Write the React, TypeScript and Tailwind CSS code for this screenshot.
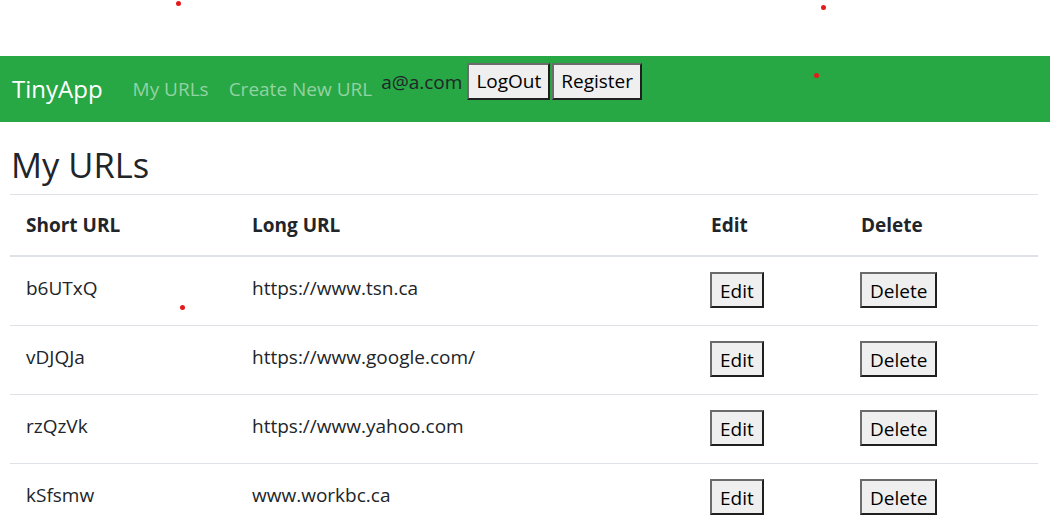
import React from "react";

const urls = [
  { id: "b6UTxQ", long: "https://www.tsn.ca" },
  { id: "vDJQJa", long: "https://www.google.com/" },
  { id: "rzQzVk", long: "https://www.yahoo.com" },
  { id: "kSfsmw", long: "www.workbc.ca" },
];

function OldButton({ children }: { children: React.ReactNode }) {
  return (
    <button className="h-[36px] px-[8px] pt-[3px] bg-[#efefef] text-[19px] leading-none text-black border-2 border-t-[#6b6b6b] border-l-[#6b6b6b] border-b-[#1f1f1f] border-r-[#1f1f1f]">
      {children}
    </button>
  );
}

export default function App() {
  return (
    <div
      className="relative w-[1050px] h-[527px] overflow-hidden bg-white text-[#212529]"
      style={{ fontFamily: '"Open Sans", "Noto Sans", sans-serif' }}
    >
      <div className="h-[56px]" />
      <nav className="h-[66px] bg-[#28a745] flex items-center px-[12px]">
        <span className="text-white text-[24px] mr-[30px]">TinyApp</span>
        <span className="text-[#93d3a2] text-[19px] mr-[20px]">My URLs</span>
        <span className="text-[#93d3a2] text-[19px] mr-[9px]">Create New URL</span>
        <span className="self-start mt-[12px] text-[19px] text-[#212529] mr-[5px]">a@a.com</span>
        <div className="self-start mt-[7px] flex gap-[2px]">
          <button className="h-[37px] px-[7px] bg-[#efefef] text-[19px] text-black border-2 border-t-[#6b6b6b] border-l-[#6b6b6b] border-b-[#1f1f1f] border-r-[#1f1f1f]">LogOut</button>
          <button className="h-[37px] px-[7px] bg-[#efefef] text-[19px] text-black border-2 border-t-[#6b6b6b] border-l-[#6b6b6b] border-b-[#1f1f1f] border-r-[#1f1f1f]">Register</button>
        </div>
      </nav>
      <main className="px-[10px]">
        <h2 className="text-[34.5px] leading-none pt-[26px] pb-[11px] pl-[1px]">My URLs</h2>
        <table className="w-[1028px] border-collapse text-[19px]">
          <thead>
            <tr className="h-[62px] border-t border-[#dee2e6] border-b-2">
              <th className="w-[226px] text-left font-bold pl-[16px]">Short URL</th>
              <th className="w-[459px] text-left font-bold pl-[16px]">Long URL</th>
              <th className="w-[150px] text-left font-bold pl-[16px]">Edit</th>
              <th className="text-left font-bold pl-[16px]">Delete</th>
            </tr>
          </thead>
          <tbody>
            {urls.map((u) => (
              <tr key={u.id} className="h-[69px] border-b border-[#dee2e6] align-top">
                <td className="pl-[16px] pt-[17px]">{u.id}</td>
                <td className="pl-[16px] pt-[17px]">{u.long}</td>
                <td className="pl-[15px] pt-[15px]">
                  <OldButton>Edit</OldButton>
                </td>
                <td className="pl-[15px] pt-[15px]">
                  <OldButton>Delete</OldButton>
                </td>
              </tr>
            ))}
          </tbody>
        </table>
      </main>
      <span className="absolute left-[176px] top-[1px] w-[5px] h-[5px] rounded-full bg-[#e31b1b]" />
      <span className="absolute left-[821px] top-[5px] w-[5px] h-[5px] rounded-full bg-[#e31b1b]" />
      <span className="absolute left-[814px] top-[73px] w-[5px] h-[5px] rounded-full bg-[#e31b1b]" />
      <span className="absolute left-[180px] top-[305px] w-[5px] h-[5px] rounded-full bg-[#e31b1b]" />
    </div>
  );
}
